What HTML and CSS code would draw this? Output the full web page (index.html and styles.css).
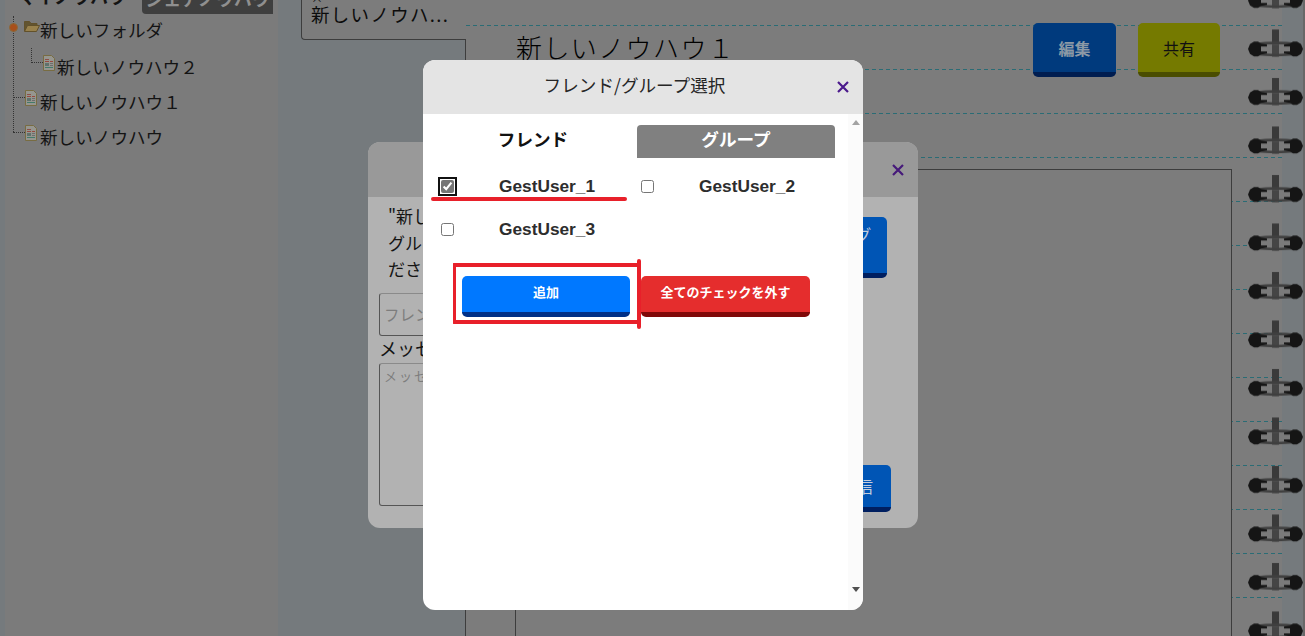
FILE: index.html
```html
<!DOCTYPE html>
<html lang="ja">
<head>
  <meta charset="UTF-8" />
  <title>ノウハウ共有</title>
  <link rel="stylesheet" href="styles.css">
</head>
<body>

  <svg class="defs" width="0" height="0">
    <symbol id="docIcon" viewBox="0 0 12 16">
      <path d="M.5.5h8l3 3v12H.5z" fill="#96968f" stroke="#786c42" />
      <path d="M2 4h4v1H2z" fill="#8c4f46" />
      <path d="M2 6h4v1H2zM7 6h3v1H7z" fill="#96483f" />
      <path d="M2 8h4v3H2z" fill="#5f726c" />
      <path d="M7 8h3v1H7zM7 10h3v1H7z" fill="#6d6d6d" />
      <path d="M2 12h8v1H2z" fill="#437a6a" />
    </symbol>
  </svg>

  <div class="app">
    <aside class="sidebar">
      <div class="side-tabs">
        <div class="side-title">マイノウハウ</div>
        <div class="side-tab">シェアノウハウ</div>
      </div>
      <div class="tree">
        <div class="row row-folder">
          <span class="toggle"></span>
          <svg class="folder" width="16" height="12" viewBox="0 0 16 12">
            <path d="M.5 11V1.5h5l1.5 2h6v2" fill="#625430" stroke="#62512a" />
            <path d="M.5 11.5l3-6h12l-3 6z" fill="#98814c" stroke="#62512a" />
          </svg>
          <span class="label">新しいフォルダ</span>
        </div>
        <div class="row row-child">
          <span class="branch branch-child"></span>
          <svg class="doc" width="12" height="16"><use href="#docIcon" /></svg>
          <span class="label label-child">新しいノウハウ２</span>
        </div>
        <div class="row">
          <span class="branch"></span>
          <svg class="doc" width="12" height="16"><use href="#docIcon" /></svg>
          <span class="label">新しいノウハウ１</span>
        </div>
        <div class="row">
          <span class="branch"></span>
          <svg class="doc" width="12" height="16"><use href="#docIcon" /></svg>
          <span class="label">新しいノウハウ</span>
        </div>
      </div>
    </aside>

    <div class="tab-col">
      <div class="open-tab">
        <span class="tab-close">×</span>
        <span class="tab-name">新しいノウハ...</span>
      </div>
      <div class="tab-rest"></div>
    </div>

    <main class="notebook">
      <div class="note-head">
        <h1 class="note-title">新しいノウハウ１</h1>
        <div class="note-actions">
          <button class="note-btn btn-edit">編集</button>
          <button class="note-btn btn-share">共有</button>
        </div>
      </div>
      <div class="note-body"></div>
    </main>
  </div>

  <svg class="rings" width="56" height="636">
    <defs>
      <pattern id="ringTile" width="56" height="48.5" y="23.5" patternUnits="userSpaceOnUse">
        <rect x="24" y="6" width="7" height="27" fill="#3a3a3a" />
        <path d="M10 21h36v9H10z" fill="#7a7a7a" />
        <rect x="24" y="21" width="7" height="12" fill="#454545" />
        <path d="M7 20.5c14-1.5 28-1.5 42 0M7 30.5c14 1.5 28 1.5 42 0" fill="none" stroke="#3f3f3f" stroke-width="2.6" />
        <path d="M0 25.5L2 20.5l4-2.5h4l3 2 6 1v2h-6v5h6v2l-6 1-3 2h-4l-4-2.5z" fill="#151515" />
        <path d="M55 25.5L53 20.5l-4-2.5h-4l-3 2-6 1v2h6v5h-6v2l6 1 3 2h4l4-2.5z" fill="#151515" />
      </pattern>
    </defs>
    <rect width="56" height="636" fill="url(#ringTile)" />
  </svg>

  <section class="modal share-modal">
    <div class="modal-head share-head">
      <span class="modal-title"></span>
      <svg class="close" width="12" height="12" viewBox="0 0 12 12"><path d="M1 1l10 10M11 1L1 11" /></svg>
    </div>
    <div class="share-body">
      <div class="share-form">
        <p class="share-text">"新しいノウハウ１"を共有する<br>グループまたはフレンドを選択して<br>ださい</p>
        <input class="share-input" type="text" placeholder="フレンド/グループ" />
        <label class="share-label">メッセージ</label>
        <textarea class="share-area" placeholder="メッセージを入力"></textarea>
      </div>
      <div class="share-side">
        <button class="side-btn side-pick">フレンド/グ<br>ループ</button>
        <button class="side-btn side-send">送信</button>
      </div>
    </div>
  </section>

  <section class="modal pick-modal">
    <div class="modal-head pick-head">
      <span class="modal-title">フレンド/グループ選択</span>
      <svg class="close" width="12" height="12" viewBox="0 0 12 12"><path d="M1 1l10 10M11 1L1 11" /></svg>
    </div>
    <div class="pick-body">
      <div class="pick-main">
        <div class="pick-tabs">
          <div class="pick-tab">フレンド</div>
          <div class="pick-tab pick-tab-off">グループ</div>
        </div>
        <div class="users">
          <label class="user"><input class="user-check is-focus" type="checkbox" checked /><span>GestUser_1</span></label>
          <label class="user"><input class="user-check" type="checkbox" /><span>GestUser_2</span></label>
          <label class="user"><input class="user-check" type="checkbox" /><span>GestUser_3</span></label>
        </div>
        <div class="pick-actions">
          <button class="pick-btn btn-add">追加</button>
          <button class="pick-btn btn-clear">全てのチェックを外す</button>
        </div>
      </div>
      <div class="scrollbar">
        <span class="arrow arrow-up"></span>
        <span class="arrow arrow-down"></span>
      </div>
    </div>

    <!-- red markup drawn on top of the dialog -->
    <span class="mark mark-under"></span>
    <span class="mark mark-box"></span>
    <span class="mark mark-right"></span>
  </section>

</body>
</html>
```

FILE: styles.css
```css
:root {
  --page: #757a7d;
  --paper: #7c7c7c;
  --line: #3d3d3d;
  --ink: #141414;
  --dash: #2a6c75;
  --red: #e8202a;
}

* {
  box-sizing: border-box;
}

body {
  margin: 0;
  height: 100vh;
  overflow: hidden;
  position: relative;
  background: var(--page);
  color: var(--ink);
  font-family: "Noto Sans CJK JP", "Liberation Sans", sans-serif;
}

.defs {
  display: block;
}

button {
  font-family: inherit;
  border-style: none;
  cursor: pointer;
}

/* page behind the dialogs, scrolled down by 20px */
.app {
  display: flex;
  height: 656px;
  margin-top: -20px;
  border-right: 2px solid #686868;
}

.sidebar {
  width: 273px;
  margin-left: 5px;
  background: #7b7b7b;
}

.side-tabs {
  display: flex;
  justify-content: space-between;
  height: 34px;
  padding-right: 5px;
}

.side-title {
  margin-left: 13px;
  font-size: 18px;
  font-weight: 700;
  line-height: 34px;
  margin-top: -1px;
}

.side-tab {
  width: 131px;
  background: #3f3f3f;
  border-bottom-left-radius: 4px;
  color: #8f8f8f;
  font-size: 18px;
  font-weight: 700;
  line-height: 36px;
  text-align: center;
  white-space: nowrap;
  overflow: hidden;
}

.tree {
  position: relative;
  margin: -2px 0 0 8px;
}

.tree::before {
  content: "";
  position: absolute;
  left: 0;
  top: 4px;
  height: 116px;
  border-left: 1px dotted #333;
}

.row {
  display: flex;
  height: 35px;
  font-size: 17.6px;
  line-height: 35px;
}

.row-folder {
  position: relative;
  height: 36.5px;
}

.row-child {
  margin-left: 18px;
}

.toggle {
  position: absolute;
  left: -4px;
  top: 11px;
  width: 9px;
  height: 9px;
  border-radius: 50%;
  background: #a84f1b;
  border: 1px solid #8a6a3a;
}

.folder {
  margin: 8px 0 0 11px;
}

.branch {
  width: 12px;
  height: 14px;
  border-bottom: 1px dotted #333;
}

.branch-child {
  height: 15px;
  margin-top: -1px;
  border-left: 1px dotted #333;
}

.doc {
  margin-top: 6px;
}

.label {
  margin-left: 3px;
}

.row-folder .label {
  margin-left: 0;
}

.label-child {
  margin-left: 2px;
}

.tab-col {
  display: flex;
  flex-direction: column;
  width: 188px;
}

.open-tab {
  display: flex;
  flex-direction: column;
  height: 60px;
  margin-left: 23px;
  padding-left: 9px;
  background: var(--paper);
  border: 1px solid var(--line);
  border-width: 0 0 1px 1px;
  border-bottom-left-radius: 4px;
}

.tab-close {
  height: 21px;
  font-size: 12px;
  line-height: 36px;
}

.tab-name {
  font-size: 18.5px;
  letter-spacing: 1.3px;
  line-height: 26px;
  white-space: nowrap;
  color: #0c0c0c;
}

.tab-rest {
  flex: 1;
  border-right: 1px solid var(--line);
}

.notebook {
  display: flex;
  flex-direction: column;
  width: 816px;
  padding: 43px 50px 0 49px;
  background-color: var(--paper);
  background-image:
    linear-gradient(var(--paper) 43px, transparent 43px),
    linear-gradient(90deg, var(--dash) 4px, var(--paper) 4px);
  background-size: 100% 44px, 7px 44px;
  background-position: 0 2px, 0 2px;
}

.note-head {
  display: flex;
  justify-content: space-between;
  height: 146px;
  padding: 0 12px 0 1px;
}

.note-title {
  margin: -1px 0 0;
  color: #000;
  font-size: 26px;
  font-weight: 300;
  letter-spacing: 1.4px;
  line-height: 50px;
}

.note-actions {
  display: flex;
  gap: 22px;
}

.note-btn {
  width: 83px;
  height: 54px;
  padding: 0;
  border-radius: 5px;
  border-bottom: 5px solid;
  font-size: 16px;
}

.btn-edit {
  background: #003a7d;
  border-color: #001d50;
  color: #8c99a6;
  font-weight: 700;
}

.btn-share {
  width: 82px;
  background: #757a00;
  border-color: #4a4d00;
  color: #111;
}

.note-body {
  flex: 1;
  background: var(--paper);
  border: 1px solid var(--line);
  border-bottom: none;
}

.rings {
  position: absolute;
  left: 1248px;
  top: 0;
}

/* dialogs */
.modal {
  position: absolute;
  display: flex;
  flex-direction: column;
  border-radius: 12px;
  overflow: hidden;
}

.modal-head {
  display: flex;
  align-items: center;
  flex: none;
  padding-right: 14px;
}

.modal-title {
  flex: 1;
  padding: 0 0 5px 9px;
  font-size: 17.6px;
  color: #262626;
  text-align: center;
}

.close path {
  fill: none;
  stroke: #4b1a8c;
  stroke-width: 2.2;
}

.share-modal {
  left: 368px;
  top: 142px;
  width: 550px;
  height: 386px;
  background: #b2b2b2;
}

.share-head {
  height: 55px;
  background: #999;
}

.share-head .close path {
  stroke: #46197a;
}

.share-body {
  flex: 1;
  display: flex;
  justify-content: space-between;
}

.share-form {
  display: flex;
  flex-direction: column;
  width: 400px;
  padding: 6px 0 0 11px;
}

.share-text {
  margin: 0 0 10px 9px;
  font-size: 17px;
  line-height: 26.5px;
  white-space: nowrap;
}

.share-input,
.share-area {
  width: 100%;
  padding: 0 4px;
  background: transparent;
  border: 1px solid #555;
  border-top-color: #8a8a8a;
  border-radius: 3px;
  font-family: inherit;
  outline: none;
}

.share-input {
  height: 43px;
  font-size: 15.5px;
}

.share-label {
  font-size: 18px;
  line-height: 24px;
}

.share-area {
  height: 143px;
  margin-top: 3px;
  padding-top: 2px;
  font-size: 13px;
  letter-spacing: 2px;
  resize: none;
}

.share-input::placeholder,
.share-area::placeholder {
  color: #7d7d7d;
}

.share-side {
  display: flex;
  flex-direction: column;
  align-items: flex-end;
  padding: 20px 27px 16px 0;
}

.side-btn {
  background: #0055b5;
  border-bottom: 5px solid #001f60;
  border-radius: 5px;
  color: #c4cedd;
  padding: 0;
}

.side-pick {
  width: 118px;
  height: 61px;
  margin-right: 4px;
  font-size: 16px;
  line-height: 22px;
  text-align: center;
}

.side-send {
  width: 100px;
  height: 47px;
  margin-top: auto;
  padding-right: 18px;
  font-size: 16px;
  text-align: right;
}

.pick-modal {
  left: 423px;
  top: 60px;
  width: 440px;
  height: 550px;
  background: #fff;
}

.pick-head {
  height: 54px;
  background: #e4e4e4;
}

.pick-body {
  flex: 1;
  display: flex;
}

.pick-main {
  flex: 1;
  padding: 11px 0 0 11px;
}

.pick-tabs {
  display: flex;
  gap: 5px;
}

.pick-tab {
  width: 198px;
  height: 33px;
  font-size: 17.6px;
  font-weight: 700;
  line-height: 28px;
  text-align: center;
  color: #111;
}

.pick-tab-off {
  background: #808080;
  border-radius: 4px 4px 0 0;
  color: #fff;
}

.users {
  display: grid;
  grid-template-columns: 200px 200px;
  grid-auto-rows: 43px;
  margin-top: 7px;
}

.user {
  display: flex;
  align-items: center;
  gap: 45px;
  padding-left: 7px;
  color: #2d2d2d;
  font-family: "Liberation Sans", sans-serif;
  font-size: 17.3px;
  font-weight: 700;
}

.user span {
  margin-top: -1px;
}

.user-check {
  width: 13px;
  height: 13px;
  margin: 0;
  flex: none;
  accent-color: #757575;
}

.is-focus {
  outline: 2px solid #111;
  outline-offset: 1px;
  border-radius: 2px;
}

.pick-actions {
  display: flex;
  gap: 11px;
  margin: 25px 0 0 28px;
}

.pick-btn {
  height: 41px;
  padding: 0 0 5px;
  border-bottom: 5px solid;
  border-radius: 5px;
  color: #fff;
  font-size: 13px;
  font-weight: 700;
}

.btn-add {
  width: 168px;
  background: #0078ff;
  border-color: #003087;
}

.btn-clear {
  width: 169px;
  background: #e52d2d;
  border-color: #800808;
}

.scrollbar {
  display: flex;
  flex-direction: column;
  justify-content: space-between;
  align-items: center;
  width: 15px;
  padding: 6px 0 18px;
  background: #fbfbfb;
}

.arrow {
  border-left: 4px solid transparent;
  border-right: 4px solid transparent;
}

.arrow-up {
  border-bottom: 5px solid #a3a3a3;
}

.arrow-down {
  border-top: 5px solid #505050;
}

.mark {
  position: absolute;
  background: var(--red);
  border-radius: 2px;
}

.mark-under {
  left: 8px;
  top: 137px;
  width: 196px;
  height: 4px;
}

.mark-box {
  left: 30px;
  top: 203px;
  width: 186px;
  height: 61px;
  background: transparent;
  border: 3px solid var(--red);
  border-width: 4px 0 4px 3px;
  border-radius: 1px;
}

.mark-right {
  left: 214px;
  top: 199px;
  width: 4px;
  height: 70px;
}
```
